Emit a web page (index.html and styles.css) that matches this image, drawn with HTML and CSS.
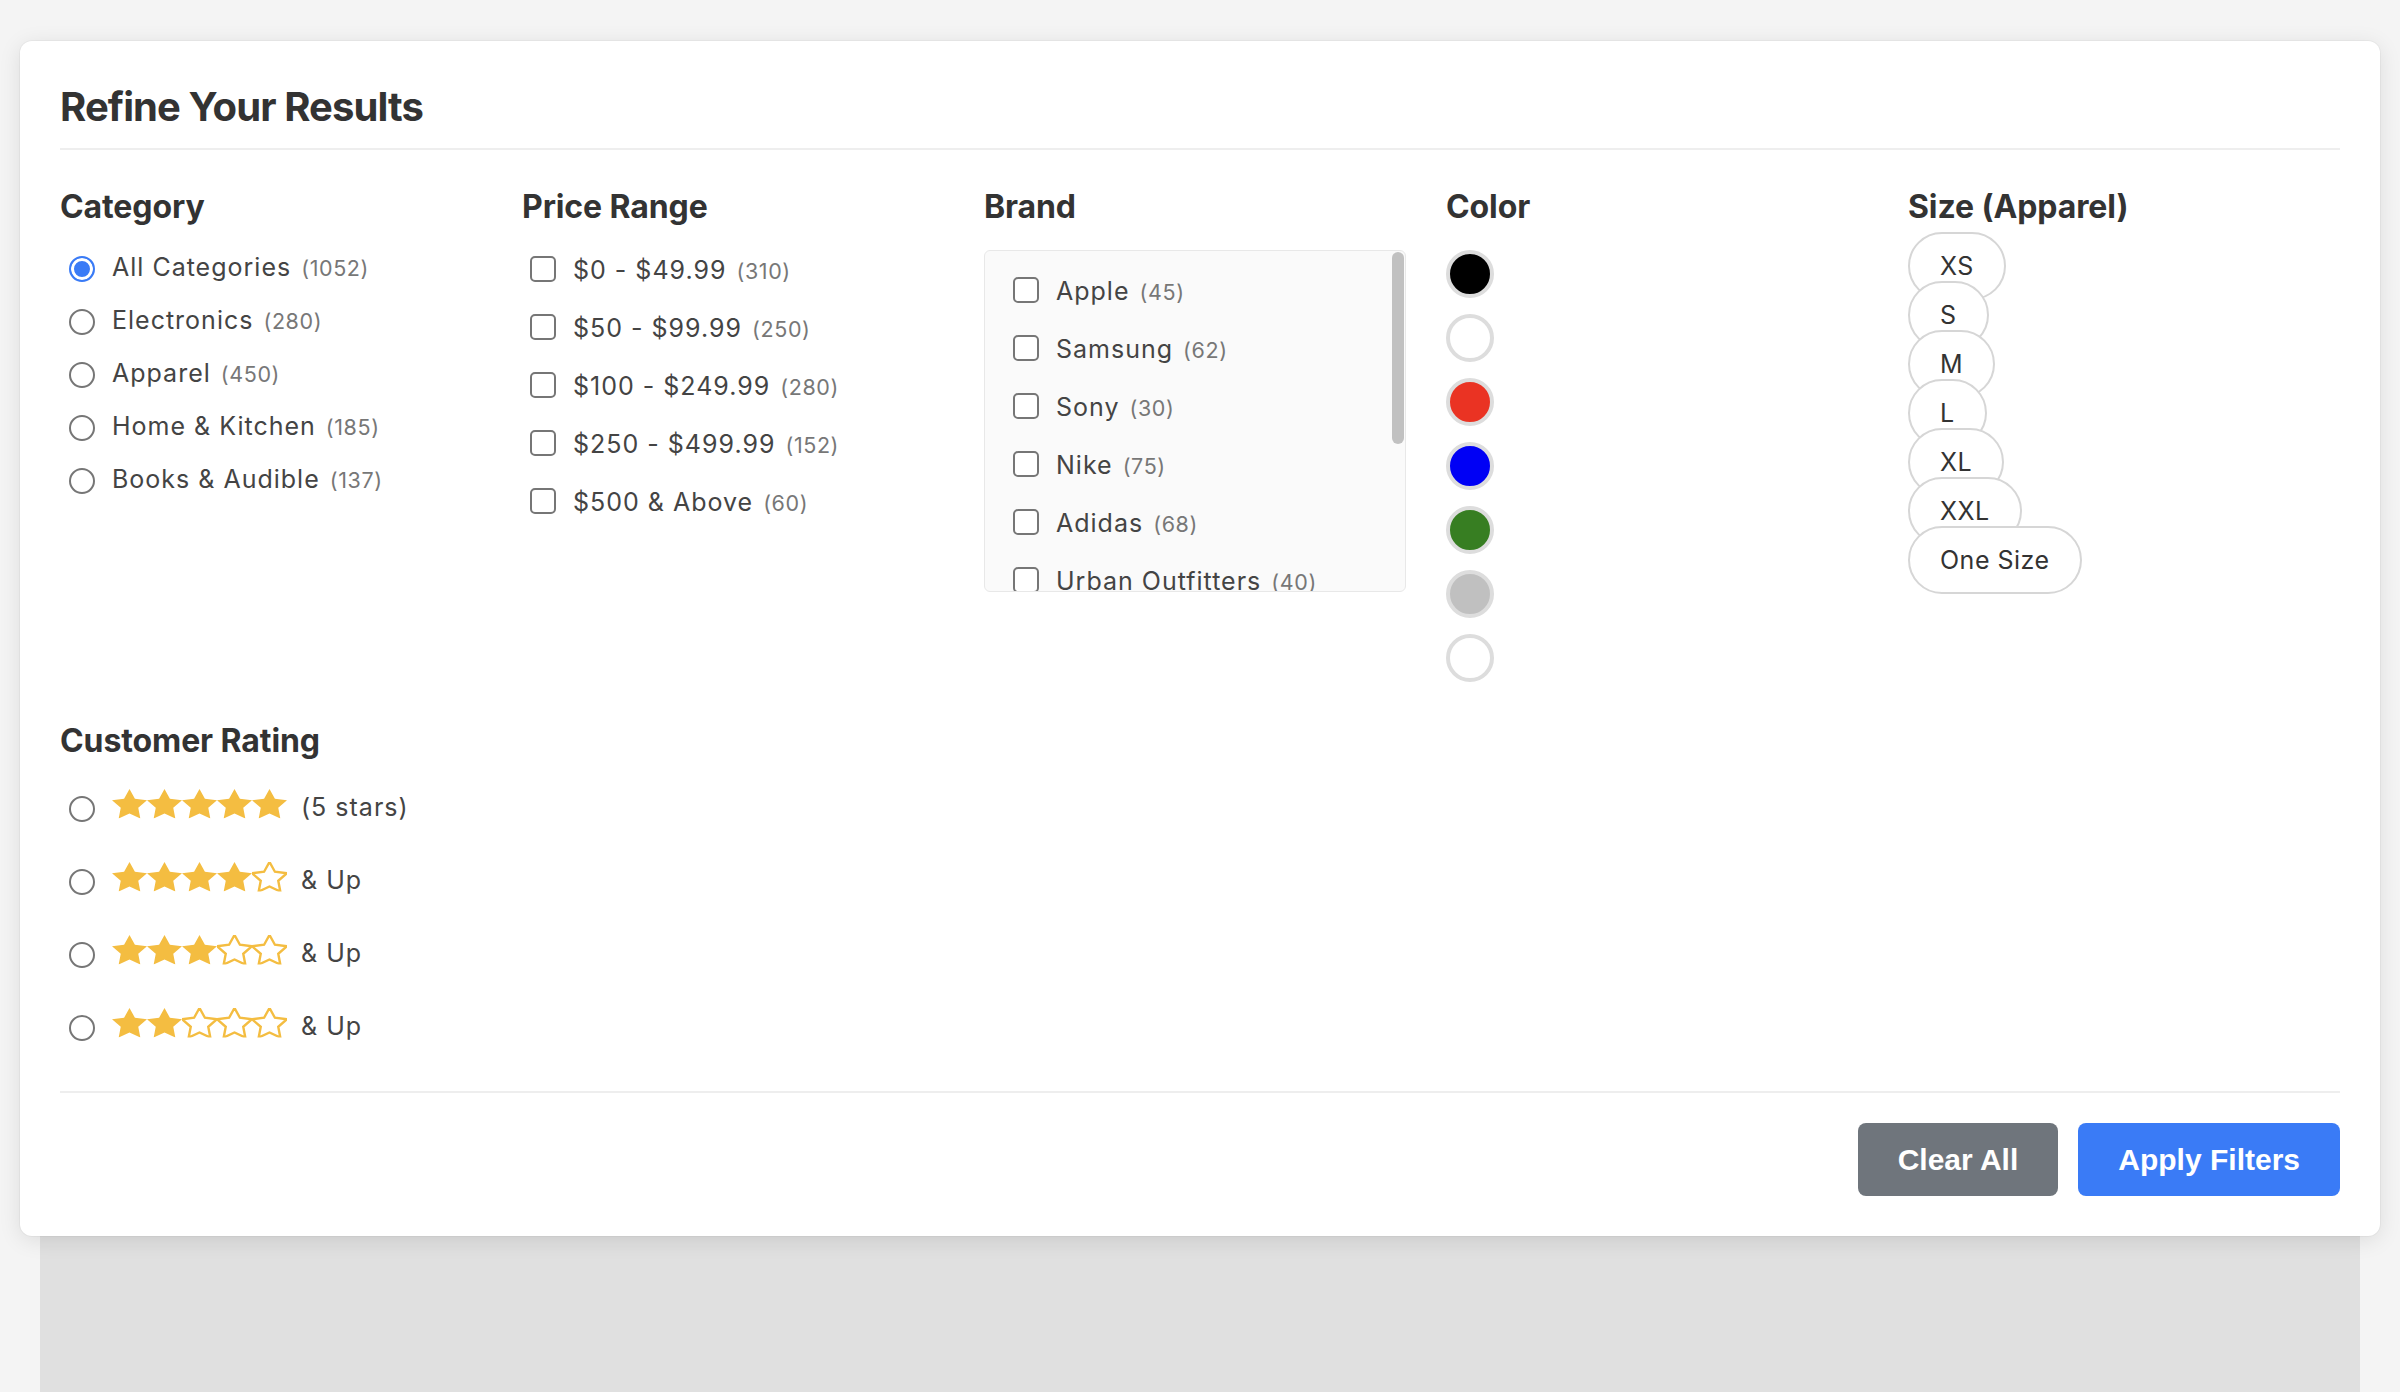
FILE: index.html
```html
<!DOCTYPE html>
<html lang="en">
<head>
<meta charset="utf-8">
<title>Refine Your Results</title>
<link rel="stylesheet" href="styles.css">
</head>
<body>
<svg class="defs" width="0" height="0" aria-hidden="true">
  <symbol id="star" viewBox="2 2 20 19.02" preserveAspectRatio="none">
    <polygon vector-effect="non-scaling-stroke" points="12,2 15.09,8.26 22,9.27 17,14.14 18.18,21.02 12,17.77 5.82,21.02 7,14.14 2,9.27 8.91,8.26"/>
  </symbol>
</svg>
<div class="page">
  <section class="panel">
    <h2 class="panel-title">Refine Your Results</h2>
    <div class="filters">
      <div class="group">
        <h3 class="group-title">Category</h3>
        <div class="options">
          <label class="opt"><input class="radio" type="radio" name="cat" checked><span class="txt">All Categories <span class="count">(1052)</span></span></label>
          <label class="opt"><input class="radio" type="radio" name="cat"><span class="txt">Electronics <span class="count">(280)</span></span></label>
          <label class="opt"><input class="radio" type="radio" name="cat"><span class="txt">Apparel <span class="count">(450)</span></span></label>
          <label class="opt"><input class="radio" type="radio" name="cat"><span class="txt">Home &amp; Kitchen <span class="count">(185)</span></span></label>
          <label class="opt"><input class="radio" type="radio" name="cat"><span class="txt">Books &amp; Audible <span class="count">(137)</span></span></label>
        </div>
      </div>
      <div class="group">
        <h3 class="group-title">Price Range</h3>
        <div class="options">
          <label class="opt opt-check"><input class="check" type="checkbox"><span class="txt">$0 - $49.99 <span class="count">(310)</span></span></label>
          <label class="opt opt-check"><input class="check" type="checkbox"><span class="txt">$50 - $99.99 <span class="count">(250)</span></span></label>
          <label class="opt opt-check"><input class="check" type="checkbox"><span class="txt">$100 - $249.99 <span class="count">(280)</span></span></label>
          <label class="opt opt-check"><input class="check" type="checkbox"><span class="txt">$250 - $499.99 <span class="count">(152)</span></span></label>
          <label class="opt opt-check"><input class="check" type="checkbox"><span class="txt">$500 &amp; Above <span class="count">(60)</span></span></label>
        </div>
      </div>
      <div class="group">
        <h3 class="group-title">Brand</h3>
        <div class="brand-box">
          <div class="brand-list">
            <label class="opt opt-check"><input class="check" type="checkbox"><span class="txt">Apple <span class="count">(45)</span></span></label>
            <label class="opt opt-check"><input class="check" type="checkbox"><span class="txt">Samsung <span class="count">(62)</span></span></label>
            <label class="opt opt-check"><input class="check" type="checkbox"><span class="txt">Sony <span class="count">(30)</span></span></label>
            <label class="opt opt-check"><input class="check" type="checkbox"><span class="txt">Nike <span class="count">(75)</span></span></label>
            <label class="opt opt-check"><input class="check" type="checkbox"><span class="txt">Adidas <span class="count">(68)</span></span></label>
            <label class="opt opt-check"><input class="check" type="checkbox"><span class="txt">Urban Outfitters <span class="count">(40)</span></span></label>
          </div>
          <span class="scroll-thumb"></span>
        </div>
      </div>
      <div class="group">
        <h3 class="group-title">Color</h3>
        <div class="swatches">
          <span class="swatch sw-black" title="Black"></span>
          <span class="swatch sw-white" title="White"></span>
          <span class="swatch sw-red" title="Red"></span>
          <span class="swatch sw-blue" title="Blue"></span>
          <span class="swatch sw-green" title="Green"></span>
          <span class="swatch sw-silver" title="Silver"></span>
          <span class="swatch sw-white" title="Other"></span>
        </div>
      </div>
      <div class="group">
        <h3 class="group-title">Size (Apparel)</h3>
        <div class="sizes">
          <span class="pill">XS</span>
          <span class="pill">S</span>
          <span class="pill">M</span>
          <span class="pill">L</span>
          <span class="pill">XL</span>
          <span class="pill">XXL</span>
          <span class="pill">One Size</span>
        </div>
      </div>
      <div class="group">
        <h3 class="group-title group-title-rating">Customer Rating</h3>
        <div class="options">
          <label class="opt rating-row"><input class="radio" type="radio" name="rating">
            <span class="stars"><svg class="star full"><use href="#star"/></svg><svg class="star full"><use href="#star"/></svg><svg class="star full"><use href="#star"/></svg><svg class="star full"><use href="#star"/></svg><svg class="star full"><use href="#star"/></svg></span>
            <span class="txt">(5 stars)</span></label>
          <label class="opt rating-row"><input class="radio" type="radio" name="rating">
            <span class="stars"><svg class="star full"><use href="#star"/></svg><svg class="star full"><use href="#star"/></svg><svg class="star full"><use href="#star"/></svg><svg class="star full"><use href="#star"/></svg><svg class="star empty"><use href="#star"/></svg></span>
            <span class="txt">&amp; Up</span></label>
          <label class="opt rating-row"><input class="radio" type="radio" name="rating">
            <span class="stars"><svg class="star full"><use href="#star"/></svg><svg class="star full"><use href="#star"/></svg><svg class="star full"><use href="#star"/></svg><svg class="star empty"><use href="#star"/></svg><svg class="star empty"><use href="#star"/></svg></span>
            <span class="txt">&amp; Up</span></label>
          <label class="opt rating-row"><input class="radio" type="radio" name="rating">
            <span class="stars"><svg class="star full"><use href="#star"/></svg><svg class="star full"><use href="#star"/></svg><svg class="star empty"><use href="#star"/></svg><svg class="star empty"><use href="#star"/></svg><svg class="star empty"><use href="#star"/></svg></span>
            <span class="txt">&amp; Up</span></label>
        </div>
      </div>
    </div>
    <div class="panel-footer">
      <button class="btn btn-secondary" type="button">Clear All</button>
      <button class="btn btn-primary" type="button">Apply Filters</button>
    </div>
  </section>
  <div class="page-content"></div>
</div>
</body>
</html>
```

FILE: styles.css
```css
html, body {
  margin: 0;
  padding: 0;
}

body {
  background: #f4f4f4;
  font-family: Inter, "Noto Sans", "Liberation Sans", sans-serif;
  color: #444;
}

.defs {
  position: absolute;
  width: 0;
  height: 0;
  overflow: hidden;
}

.page {
  min-height: 1392px;
  box-sizing: border-box;
  padding-top: 41px;
  display: flex;
  flex-direction: column;
}

.panel {
  position: relative;
  z-index: 1;
  margin: 0 20px;
  padding: 40px;
  background: #fff;
  border-radius: 12px;
  box-shadow: 0 0 0 1px rgba(0, 0, 0, 0.03), 0 4px 22px rgba(0, 0, 0, 0.1);
}

.page-content {
  flex: 1;
  margin: 0 40px;
  background: #e0e0e0;
}

.panel-title {
  margin: 0 0 37px;
  padding-bottom: 15px;
  border-bottom: 2px solid #eeeeee;
  font-size: 40px;
  line-height: 52px;
  font-weight: 700;
  letter-spacing: -0.9px;
  color: #333;
}

.filters {
  display: grid;
  grid-template-columns: repeat(5, 422px);
  column-gap: 40px;
  row-gap: 39px;
}

.group-title {
  margin: 0 0 22.5px;
  font-size: 32px;
  line-height: 40px;
  font-weight: 700;
  color: #333;
  letter-spacing: -0.1px;
}

.group-title-rating {
  margin-bottom: 19px;
}

.opt {
  display: flex;
  align-items: center;
  height: 32px;
  margin-bottom: 21px;
  font-size: 25px;
  line-height: 30px;
  letter-spacing: 1px;
  color: #444;
  white-space: nowrap;
}

.opt:last-child {
  margin-bottom: 0;
}

.opt-check {
  height: 38px;
  margin-bottom: 20px;
}

.txt {
  padding-top: 3px;
}

.count {
  margin-left: 2px;
  font-size: 21.5px;
  color: #777;
  letter-spacing: 0.6px;
}

.radio {
  appearance: none;
  -webkit-appearance: none;
  flex: none;
  box-sizing: border-box;
  width: 26px;
  height: 26px;
  margin: 6px 17px 0 9px;
  border: 2px solid #767676;
  border-radius: 50%;
  background: #fff;
}

.radio:checked {
  border-color: #3a7bf6;
  background: #3a7bf6;
  box-shadow: inset 0 0 0 3px #fff;
}

.check {
  appearance: none;
  -webkit-appearance: none;
  flex: none;
  box-sizing: border-box;
  width: 26px;
  height: 26px;
  margin: 6px 17px 6px 8px;
  border: 2px solid #767676;
  border-radius: 5px;
  background: #fff;
}

.brand-box {
  position: relative;
  box-sizing: border-box;
  height: 342px;
  overflow: hidden;
  border: 1px solid #e8e8e8;
  border-radius: 6px;
  background: #fafafa;
}

.brand-list {
  padding: 20px;
}

.scroll-thumb {
  position: absolute;
  top: 1px;
  right: 1px;
  width: 12px;
  height: 192px;
  border-radius: 6px;
  background: #c1c1c1;
}

.swatches {
  display: flex;
  flex-direction: column;
  align-items: flex-start;
  gap: 16px;
}

.swatch {
  display: block;
  box-sizing: border-box;
  width: 48px;
  height: 48px;
  border: 4px solid #dddddd;
  border-radius: 50%;
}

.sw-black { background: #000; }
.sw-white { background: #fff; }
.sw-red { background: #ea3323; }
.sw-blue { background: #0000f5; }
.sw-green { background: #377e22; }
.sw-silver { background: #c0c0c0; }

.sizes {
  display: flex;
  flex-direction: column;
  align-items: flex-start;
  margin-top: -17.5px;
}

.pill {
  display: block;
  box-sizing: border-box;
  height: 68px;
  margin-bottom: -19px;
  padding: 0 30px;
  border: 2px solid #d6d6d6;
  border-radius: 34px;
  background: #fff;
  font-size: 25px;
  line-height: 64px;
  letter-spacing: 0.5px;
  color: #333;
}

.rating-row {
  height: 52px;
}

.rating-row:not(:last-child) {
  margin-bottom: 21px;
}

.stars {
  display: flex;
  margin: 0 14px 3px 0;
}

.star {
  display: block;
  width: 35px;
  height: 29.5px;
}

.star.full {
  fill: #f4bd41;
}

.star.empty {
  fill: none;
  stroke: #f4bd41;
  stroke-width: 2.4px;
}

.panel-footer {
  display: flex;
  justify-content: flex-end;
  gap: 20px;
  margin-top: 40.5px;
  padding-top: 30px;
  border-top: 2px solid #eeeeee;
}

.btn {
  padding: 20px 40px;
  border: 0;
  border-radius: 8px;
  font-family: "Liberation Sans", Arial, sans-serif;
  font-size: 30px;
  line-height: 33px;
  font-weight: 700;
  color: #fff;
  cursor: pointer;
}

.btn-secondary {
  background: #6f757c;
}

.btn-primary {
  background: #3a7bf6;
}
```
